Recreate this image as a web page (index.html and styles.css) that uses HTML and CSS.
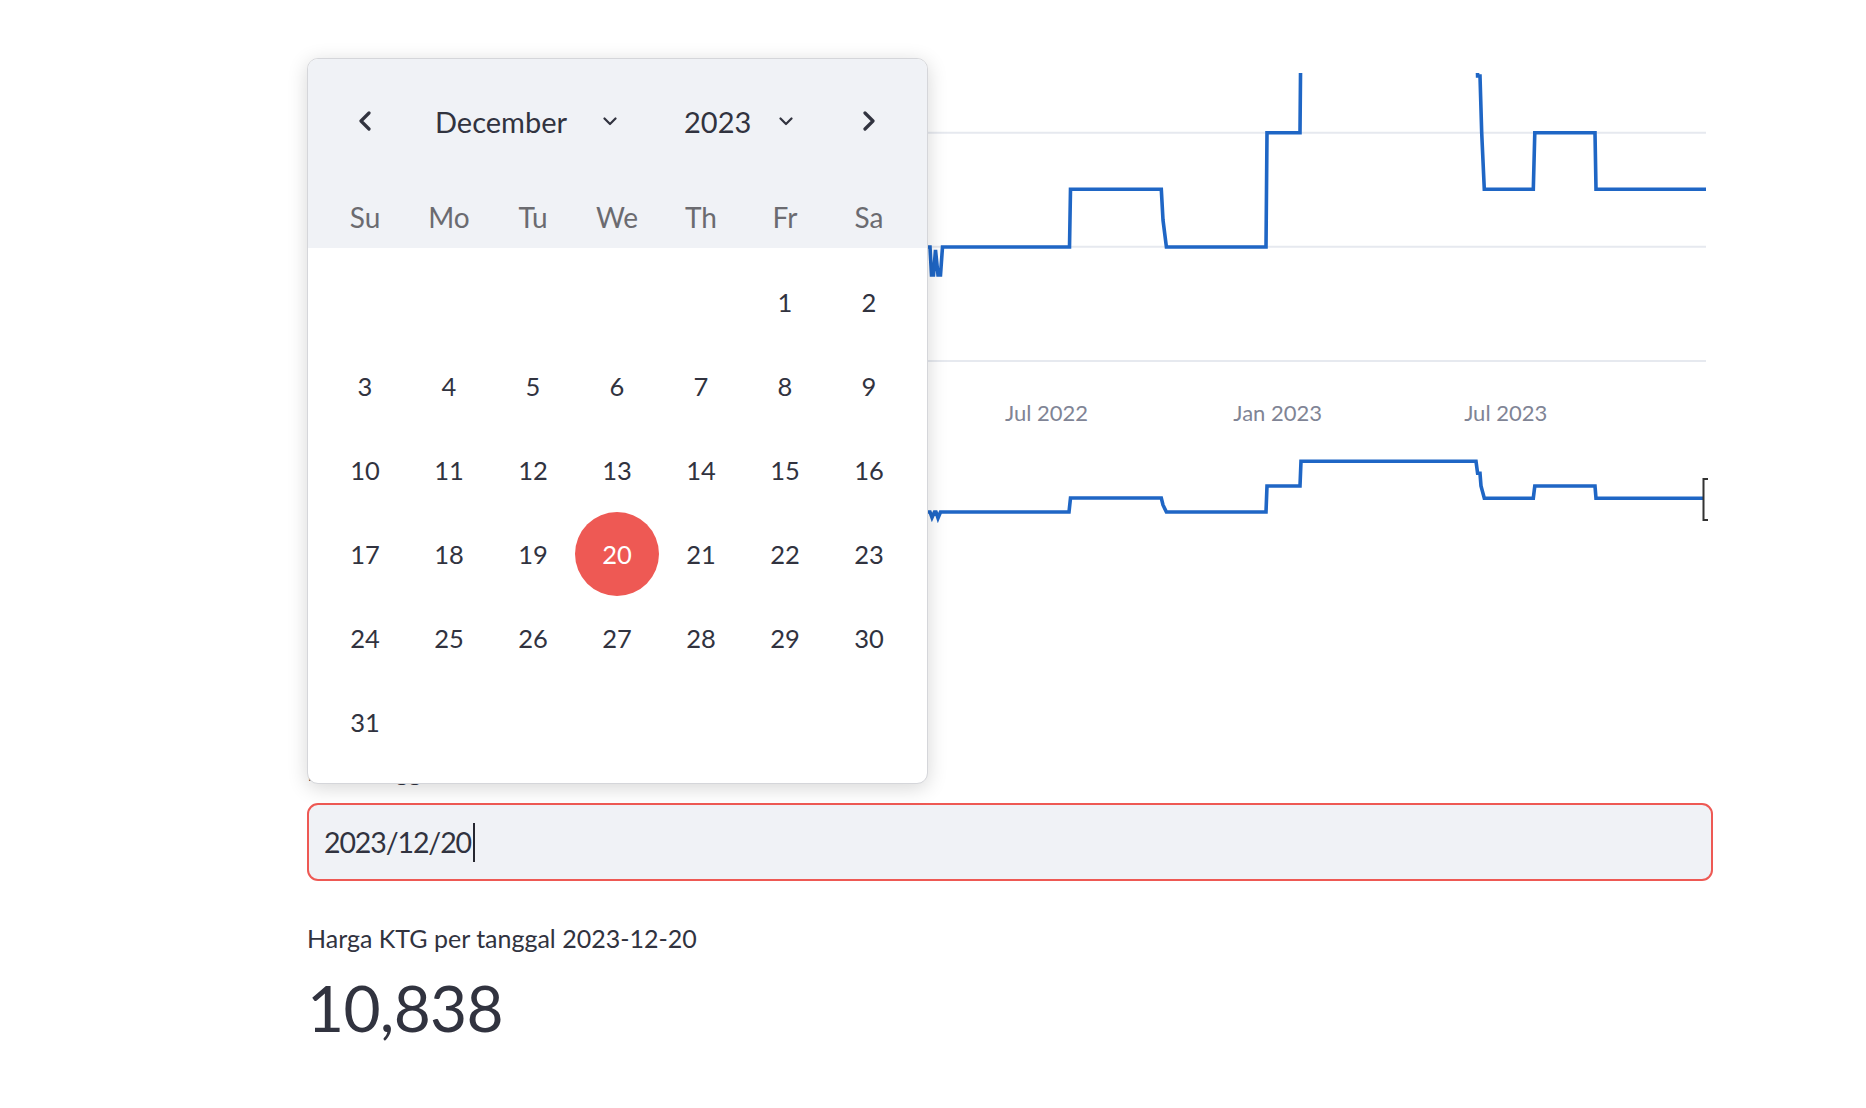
FILE: index.html
```html
<!DOCTYPE html>
<html lang="id">
<head>
<meta charset="utf-8">
<title>Harga KTG</title>
<link rel="stylesheet" href="styles.css">
</head>
<body>
<div class="page">
  <div class="chart">
    <svg class="chart-svg" width="1406" height="560" viewBox="307 0 1406 560" xmlns="http://www.w3.org/2000/svg">
      <defs>
        <clipPath id="plot-clip"><rect x="380" y="73" width="1326" height="300"/></clipPath>
      </defs>
      <g class="grid">
        <line x1="380" y1="132.7" x2="1706" y2="132.7"/>
        <line x1="380" y1="246.7" x2="1706" y2="246.7"/>
        <line x1="380" y1="361" x2="1706" y2="361"/>
      </g>
      <path class="series" clip-path="url(#plot-clip)" d="M400,247 L700,247 L702,189 L800,189 L803,247 L930,247 L931.5,275 L933.5,275 L935.5,250 L938,275 L940.5,275 L942.5,247 L1069.5,247 L1070.5,189.3 L1161.3,189.3 L1163,220 L1166.4,247 L1266,247 L1267,132.7 L1300,132.7 L1301,19 L1476,19 L1477.6,76 L1480,76 L1481.7,132.7 L1484.3,189.3 L1533.3,189.3 L1534.8,132.7 L1595,132.7 L1596,189.3 L1706,189.3"/>
      <g class="axis-label">
        <text x="1046.5" y="421">Jul 2022</text>
        <text x="1277.7" y="421">Jan 2023</text>
        <text x="1505.7" y="421">Jul 2023</text>
      </g>
      <path class="series" d="M400,512 L700,512 L702,498 L800,498 L803,512 L930,512 L932,517.5 L934.5,512 L936,512 L938,518 L940.5,512 L1069,512 L1070.5,498 L1161.3,498 L1163,505 L1166.4,512 L1266,512 L1267,486 L1300,486 L1301,461.3 L1476,461.3 L1477.6,473.3 L1480,473.3 L1481,486 L1484.3,498.3 L1533.3,498.3 L1534.8,486 L1595,486 L1596,498.3 L1703,498.3"/>
      <path class="brush" d="M1708,479 L1703.5,479 L1703.5,520 L1708,520"/>
    </svg>
  </div>

  <div class="field">
    <label class="field-label">Pilih tanggal</label>
    <div class="input"><span class="input-text">2023/12/20</span><span class="caret"></span></div>
  </div>

  <div class="metric">
    <div class="metric-label">Harga KTG per tanggal 2023-12-20</div>
    <div class="metric-value">10,838</div>
  </div>

  <div class="popover">
    <div class="cal-head">
      <div class="month-row">
        <div class="nav-btn">
          <svg width="16" height="20" viewBox="0 0 16 20"><path d="M12 2 L4 10 L12 18" class="chev-big"/></svg>
        </div>
        <div class="select select-month">
          <span class="select-text month-text">December</span>
          <svg class="chev-down" width="14" height="9" viewBox="0 0 14 9"><path d="M1.5 1.5 L7 7 L12.5 1.5"/></svg>
        </div>
        <div class="select select-year">
          <span class="select-text year-text">2023</span>
          <svg class="chev-down" width="14" height="9" viewBox="0 0 14 9"><path d="M1.5 1.5 L7 7 L12.5 1.5"/></svg>
        </div>
        <div class="nav-btn nav-next">
          <svg width="16" height="20" viewBox="0 0 16 20"><path d="M4 2 L12 10 L4 18" class="chev-big"/></svg>
        </div>
      </div>
      <div class="week-row">
        <span>Su</span><span>Mo</span><span>Tu</span><span>We</span><span>Th</span><span>Fr</span><span>Sa</span>
      </div>
    </div>
    <div class="days">
      <span class="day empty"></span><span class="day empty"></span><span class="day empty"></span><span class="day empty"></span><span class="day empty"></span><span class="day">1</span><span class="day">2</span>
      <span class="day">3</span><span class="day">4</span><span class="day">5</span><span class="day">6</span><span class="day">7</span><span class="day">8</span><span class="day">9</span>
      <span class="day">10</span><span class="day">11</span><span class="day">12</span><span class="day">13</span><span class="day">14</span><span class="day">15</span><span class="day">16</span>
      <span class="day">17</span><span class="day">18</span><span class="day">19</span><span class="day selected">20</span><span class="day">21</span><span class="day">22</span><span class="day">23</span>
      <span class="day">24</span><span class="day">25</span><span class="day">26</span><span class="day">27</span><span class="day">28</span><span class="day">29</span><span class="day">30</span>
      <span class="day">31</span>
    </div>
  </div>
</div>
</body>
</html>
```

FILE: styles.css
```css
html, body {
  margin: 0;
  padding: 0;
  background: #ffffff;
}

body {
  font-family: Lato, "Noto Sans", sans-serif;
  color: #31333f;
}

.page {
  position: relative;
  margin-left: 307px;
  width: 1406px;
}

/* ---------- chart ---------- */
.chart-svg {
  display: block;
}

.grid line {
  stroke: #e6e9ef;
  stroke-width: 2;
}

.series {
  fill: none;
  stroke: #1f66c5;
  stroke-width: 3.6;
  stroke-linejoin: miter;
}

.brush {
  fill: none;
  stroke: #333333;
  stroke-width: 2;
}

.axis-label text {
  font-family: Lato, "Noto Sans", sans-serif;
  font-size: 22px;
  fill: #808495;
  text-anchor: middle;
}

/* ---------- date input ---------- */
.field {
  margin-top: 193px;
}

.field-label {
  display: block;
  font-size: 25px;
  line-height: 36px;
  color: #31333f;
}

.input {
  box-sizing: border-box;
  margin-top: 14px;
  height: 78px;
  border: 2px solid #ee5954;
  border-radius: 11px;
  background: #f0f2f6;
  display: flex;
  align-items: center;
  padding-left: 15px;
}

.input-text {
  font-size: 28.5px;
  letter-spacing: -1.1px;
  color: #31333f;
}

.caret {
  display: inline-block;
  width: 2px;
  height: 39px;
  margin-left: 2px;
  background: #262730;
}

/* ---------- metric ---------- */
.metric {
  margin-top: 39px;
}

.metric-label {
  font-size: 25px;
  line-height: 36px;
  color: #31333f;
}

.metric-value {
  margin-top: 14px;
  font-size: 64px;
  line-height: 76.8px;
  letter-spacing: -0.7px;
  color: #31333f;
}

/* ---------- calendar popover ---------- */
.popover {
  position: absolute;
  left: 0;
  top: 58px;
  box-sizing: border-box;
  width: 621px;
  border: 1px solid #d5d6da;
  border-radius: 11px;
  background: #ffffff;
  overflow: hidden;
  box-shadow: 0 4px 20px rgba(0, 0, 0, 0.16);
}

.cal-head {
  background: #f0f2f6;
  padding: 30px 16px 1px 15px;
}

.month-row {
  height: 64px;
  display: flex;
  align-items: center;
}

.nav-btn {
  width: 84px;
  display: flex;
  justify-content: center;
  align-items: center;
}

.nav-next {
  margin-left: auto;
}

.chev-big {
  fill: none;
  stroke: #31333f;
  stroke-width: 3.2;
  stroke-linecap: round;
  stroke-linejoin: round;
}

.select {
  display: flex;
  align-items: center;
}

.select-month {
  margin-left: 28px;
}

.select-year {
  margin-left: 67px;
}

.select-text {
  font-size: 29px;
  color: #31333f;
  white-space: nowrap;
}

.month-text {
  width: 134px;
}

.year-text {
  width: 61px;
}

.chev-down {
  margin-left: 34px;
}

.chev-down path {
  fill: none;
  stroke: #31333f;
  stroke-width: 2.2;
  stroke-linecap: round;
  stroke-linejoin: round;
}

.week-row {
  margin-top: 34px;
  height: 60px;
  display: grid;
  grid-template-columns: repeat(7, 84px);
  align-items: center;
}

.week-row span {
  text-align: center;
  font-size: 28px;
  color: #6b6b70;
}

.days {
  display: grid;
  grid-template-columns: repeat(7, 84px);
  grid-auto-rows: 84px;
  padding: 12px 16px 19px 15px;
}

.day {
  display: flex;
  align-items: center;
  justify-content: center;
  font-size: 25.5px;
  color: #31333f;
}

.day.selected {
  background: #ee5954;
  color: #ffffff;
  border-radius: 50%;
}
```
